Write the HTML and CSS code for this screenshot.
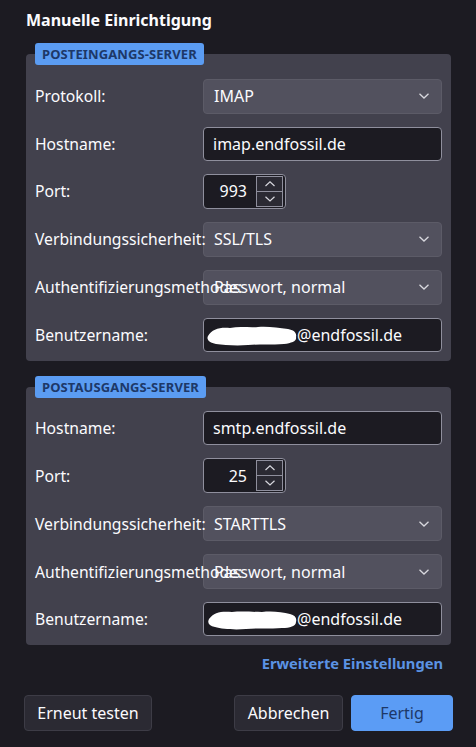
FILE: index.html
```html
<!DOCTYPE html>
<html lang="de">
<head>
<meta charset="utf-8">
<title>Manuelle Einrichtigung</title>
<link rel="stylesheet" href="styles.css">
</head>
<body>
<div class="dialog">
  <h1 class="title">Manuelle Einrichtigung</h1>

  <section class="panel">
    <div class="badge">POSTEINGANGS-SERVER</div>
    <div class="rows">
      <span class="label">Protokoll:</span>
      <div class="select"><span>IMAP</span><svg class="chev" width="12" height="8" viewBox="0 0 12 8"><path d="M1.5 1.8 L6 6 L10.5 1.8" fill="none" stroke="#d8d8de" stroke-width="1.3"/></svg></div>

      <span class="label">Hostname:</span>
      <div class="input">imap.endfossil.de</div>

      <span class="label">Port:</span>
      <div class="number">
        <span class="num">993</span>
        <div class="spin">
          <span class="spin-btn"><svg width="12" height="8" viewBox="0 0 12 8"><path d="M1.5 6 L6 1.8 L10.5 6" fill="none" stroke="#d8d8de" stroke-width="1.2"/></svg></span>
          <span class="spin-btn"><svg width="12" height="8" viewBox="0 0 12 8"><path d="M1.5 1.8 L6 6 L10.5 1.8" fill="none" stroke="#d8d8de" stroke-width="1.2"/></svg></span>
        </div>
      </div>

      <span class="label">Verbindungssicherheit:</span>
      <div class="select"><span>SSL/TLS</span><svg class="chev" width="12" height="8" viewBox="0 0 12 8"><path d="M1.5 1.8 L6 6 L10.5 1.8" fill="none" stroke="#d8d8de" stroke-width="1.3"/></svg></div>

      <span class="label">Authentifizierungsmethode:</span>
      <div class="select"><span>Passwort, normal</span><svg class="chev" width="12" height="8" viewBox="0 0 12 8"><path d="M1.5 1.8 L6 6 L10.5 1.8" fill="none" stroke="#d8d8de" stroke-width="1.3"/></svg></div>

      <span class="label">Benutzername:</span>
      <div class="input user"><svg class="blot" width="92" height="26" viewBox="0 0 92 26"><path d="M2 14 C6 7 14 5 24 6 C34 4 44 6 52 5 C62 4 72 6 82 7 C88 8 91 11 90 15 C91 19 86 21 78 22 C66 23 54 22 42 23 C30 24 18 23 10 22 C4 21 0 18 2 14 Z" fill="#ffffff"/></svg><span>@endfossil.de</span></div>
    </div>
  </section>

  <section class="panel second">
    <div class="badge">POSTAUSGANGS-SERVER</div>
    <div class="rows">
      <span class="label">Hostname:</span>
      <div class="input">smtp.endfossil.de</div>

      <span class="label">Port:</span>
      <div class="number">
        <span class="num">25</span>
        <div class="spin">
          <span class="spin-btn"><svg width="12" height="8" viewBox="0 0 12 8"><path d="M1.5 6 L6 1.8 L10.5 6" fill="none" stroke="#d8d8de" stroke-width="1.2"/></svg></span>
          <span class="spin-btn"><svg width="12" height="8" viewBox="0 0 12 8"><path d="M1.5 1.8 L6 6 L10.5 1.8" fill="none" stroke="#d8d8de" stroke-width="1.2"/></svg></span>
        </div>
      </div>

      <span class="label">Verbindungssicherheit:</span>
      <div class="select"><span>STARTTLS</span><svg class="chev" width="12" height="8" viewBox="0 0 12 8"><path d="M1.5 1.8 L6 6 L10.5 1.8" fill="none" stroke="#d8d8de" stroke-width="1.3"/></svg></div>

      <span class="label">Authentifizierungsmethode:</span>
      <div class="select"><span>Passwort, normal</span><svg class="chev" width="12" height="8" viewBox="0 0 12 8"><path d="M1.5 1.8 L6 6 L10.5 1.8" fill="none" stroke="#d8d8de" stroke-width="1.3"/></svg></div>

      <span class="label">Benutzername:</span>
      <div class="input user"><svg class="blot" width="92" height="26" viewBox="0 0 92 26"><path d="M3 13 C8 6 16 5 26 6 C36 5 46 6 56 6 C66 5 76 6 84 8 C89 9 91 12 90 16 C90 20 84 22 76 22 C64 23 52 22 40 23 C28 24 16 23 9 21 C3 20 1 17 3 13 Z" fill="#ffffff"/></svg><span>@endfossil.de</span></div>
    </div>
  </section>

  <div class="link-row"><a class="link" href="#">Erweiterte Einstellungen</a></div>

  <div class="buttons">
    <button class="btn retest">Erneut testen</button>
    <div class="actions">
      <button class="btn cancel">Abbrechen</button>
      <button class="btn primary">Fertig</button>
    </div>
  </div>
</div>
</body>
</html>
```

FILE: styles.css
```css
* { box-sizing: border-box; }

html, body {
  margin: 0;
  padding: 0;
  background: #1c1b22;
}

body {
  font-family: "Noto Sans", "Open Sans", sans-serif;
  color: #fbfbfe;
  font-size: 16px;
}

.dialog {
  display: flex;
  flex-direction: column;
  padding: 9px 23px 0 24px;
}

.title {
  margin: 0 0 0 2px;
  font-size: 16px;
  font-weight: 700;
  line-height: 22px;
}

.panel {
  margin: 23px 2px 0 2px;
  background: #42414d;
  border-radius: 4px;
  padding: 0 9px 9px 9px;
  display: flex;
  flex-direction: column;
}

.panel.second {
  margin-top: 26px;
}

.badge {
  align-self: flex-start;
  margin-top: -11px;
  height: 22px;
  padding: 0 7px;
  background: #5b9cf2;
  color: #1d3868;
  border-radius: 3px;
  font-size: 13px;
  font-weight: 700;
  line-height: 22px;
  letter-spacing: 0.1px;
}

.rows {
  margin-top: 13.5px;
  display: grid;
  grid-template-columns: 168px 1fr;
  row-gap: 13px;
  align-items: center;
}

.label {
  position: relative;
  z-index: 1;
  white-space: nowrap;
  font-size: 15.7px;
  line-height: 22px;
}

.select {
  height: 35px;
  background: #52515e;
  border: 1px solid #5c5b67;
  border-radius: 4px;
  display: flex;
  align-items: center;
  justify-content: space-between;
  padding: 0 11px 0 10px;
  font-size: 16px;
}

.chev { display: block; }

.input {
  height: 34px;
  background: #1c1b22;
  border: 1px solid #8f8f9d;
  border-radius: 4px;
  display: flex;
  align-items: center;
  padding: 0 9px;
  font-size: 16px;
}

.input.user {
  padding-left: 2px;
}

.blot {
  display: block;
  flex: none;
  margin-right: -1px;
}

.number {
  width: 83px;
  height: 35px;
  background: #1c1b22;
  border: 1px solid #8f8f9d;
  border-radius: 4px;
  display: flex;
  align-items: center;
  padding: 0 2px 0 0;
}

.num {
  flex: 1;
  text-align: right;
  padding-right: 9px;
}

.spin {
  width: 27px;
  height: 31px;
  display: flex;
  flex-direction: column;
  border: 1px solid #8f8f9d;
  background: #2b2a33;
}

.spin-btn {
  flex: 1;
  display: flex;
  align-items: center;
  justify-content: center;
}

.spin-btn + .spin-btn {
  border-top: 1px solid #8f8f9d;
}

.link-row {
  display: flex;
  justify-content: flex-end;
  margin-top: 8px;
  padding-right: 10px;
}

.link {
  color: #5b93e4;
  font-weight: 700;
  font-size: 14.7px;
  line-height: 20px;
  text-decoration: none;
}

.buttons {
  margin-top: 22px;
  display: flex;
  justify-content: space-between;
  align-items: center;
}

.actions {
  display: flex;
  gap: 8px;
}

.btn {
  height: 36px;
  font-family: "Noto Sans", "Open Sans", sans-serif;
  font-size: 16px;
  color: #fbfbfe;
  background: #2b2a33;
  border: 1px solid #3d3c46;
  border-radius: 4px;
  padding: 0;
}

.retest { width: 128px; }
.cancel { width: 109px; }

.primary {
  width: 102px;
  background: #5b9cf5;
  border-color: #5b9cf5;
  color: #1d3868;
}
```
